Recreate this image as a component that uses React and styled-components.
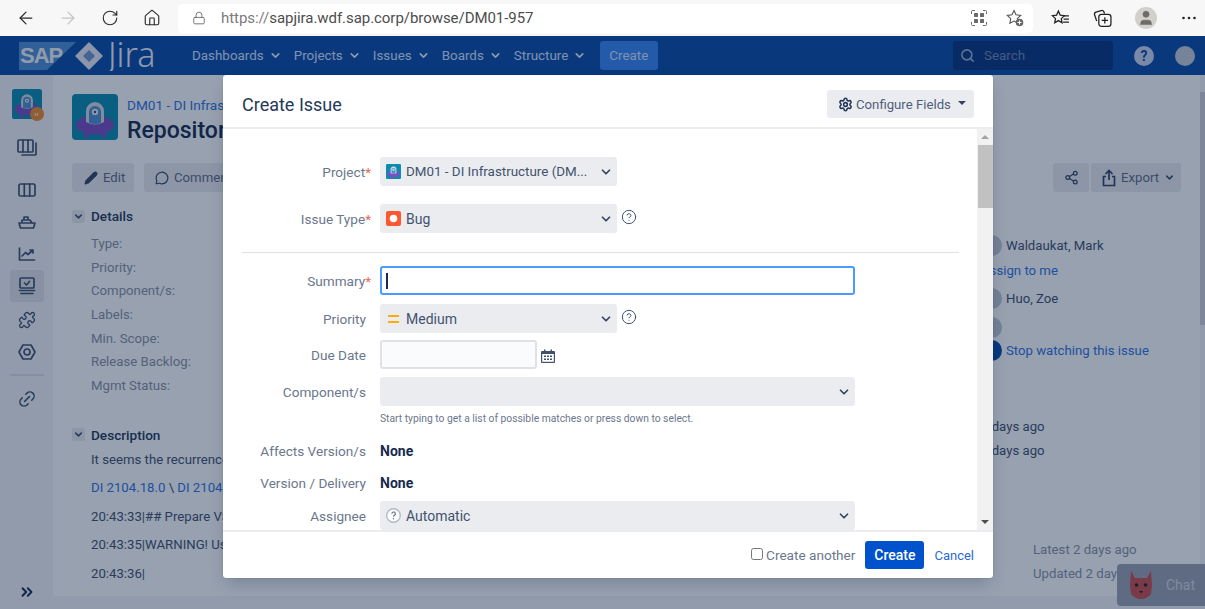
import React from 'react'
import styled, { createGlobalStyle } from 'styled-components'
import { ArrowLeft, ArrowRight, RotateCw, Home, Lock, Search, Settings, Link2, ChevronsRight, Pencil, MessageCircle, Share2, Puzzle, ChevronDown, HelpCircle, User } from 'lucide-react'

const GlobalStyle = createGlobalStyle`
  html, body { margin: 0; padding: 0; height: 100%; overflow: hidden; }
  body { font-family: Roboto, "Noto Sans", sans-serif; font-size: 13.6px; color: #172b4d; }
  #root { height: 100%; }
  * { box-sizing: border-box; }
`

const Screen = styled.div`
  width: 1205px;
  height: 609px;
  display: flex;
  flex-direction: column;
  overflow: hidden;
`

/* browser chrome */
const BrowserBar = styled.div`
  height: 36px;
  flex: none;
  background: #f7f7f7;
  display: flex;
  align-items: center;
  padding-left: 5px;
`

const ToolSlot = styled.div`
  width: ${p => p.$w || 42}px;
  height: 30px;
  flex: none;
  display: flex;
  align-items: center;
  justify-content: center;
  color: ${p => p.$muted ? '#c4c4c4' : '#2b2b2b'};
`

const UrlPill = styled.div`
  width: 855px;
  height: 29px;
  margin: 0 6px 0 5px;
  background: #fff;
  border-radius: 5px;
  display: flex;
  align-items: center;
  padding: 0 0 0 14px;
  flex: none;
`

const UrlText = styled.div`
  margin-left: 15px;
  flex: 1;
  font-size: 15px;
  letter-spacing: -0.05px;
  color: #4d4d4d;
  span { color: #7a7a7a; }
`

const ProfileDot = styled.div`
  width: 22px;
  height: 22px;
  border-radius: 50%;
  background: #d2d0cc;
  color: #6f6c68;
  display: flex;
  align-items: center;
  justify-content: center;
  overflow: hidden;
`

/* everything below the browser bar */
const Page = styled.div`
  position: relative;
  flex: 1;
  min-height: 0;
  display: flex;
  flex-direction: column;
  background: #fff;
`

const Blanket = styled.div`
  position: absolute;
  inset: 0;
  background: rgba(9, 30, 66, 0.42);
`

/* jira nav */
const Nav = styled.nav`
  height: 39px;
  flex: none;
  background: #0a4aa8;
  display: flex;
  align-items: center;
  padding-left: 19px;
  color: #fff;
`

const LogoWrap = styled.div`
  width: 140px;
  height: 30px;
  flex: none;
  margin-right: 33px;
`

const NavItem = styled.div`
  display: flex;
  align-items: center;
  gap: 5px;
  margin-right: 12px;
  font-size: 13.4px;
  color: #d4e4ff;
`

const NavCreate = styled.div`
  width: 58px;
  height: 29px;
  margin-left: 1.5px;
  background: #3685f5;
  border-radius: 3px;
  display: flex;
  align-items: center;
  justify-content: center;
  font-size: 13.4px;
  color: #d4e4ff;
`

const SearchBox = styled.div`
  width: 160px;
  height: 29px;
  margin-left: auto;
  background: #08357f;
  border-radius: 3px;
  display: flex;
  align-items: center;
  gap: 9px;
  padding-left: 7px;
  font-size: 13.4px;
  color: #6f87ad;
  svg { color: #9fb0cb; }
`

const NavRound = styled.div`
  width: 20px;
  height: 20px;
  border-radius: 50%;
  background: ${p => p.$bg};
  margin-left: ${p => p.$ml}px;
  margin-right: ${p => p.$mr || 0}px;
  display: flex;
  align-items: center;
  justify-content: center;
  font-weight: 700;
  font-size: 14px;
  color: #0a4aa8;
`

/* page behind the dialog */
const Body = styled.div`
  flex: 1;
  min-height: 0;
  display: flex;
`

const Sidebar = styled.aside`
  width: 53px;
  flex: none;
  background: #f4f5f7;
  display: flex;
  flex-direction: column;
  align-items: center;
  padding-top: 14px;
  color: #42526e;
`

const SideLogo = styled.div`
  position: relative;
  width: 30px;
  height: 30px;
  margin-bottom: 13px;
`

const SideBadge = styled.div`
  position: absolute;
  right: -2px;
  bottom: -2px;
  width: 14px;
  height: 14px;
  border-radius: 50%;
  background: #f28c28;
  color: #fff;
  font-size: 7px;
  font-weight: 700;
  display: flex;
  align-items: center;
  justify-content: center;
`

const SideIcon = styled.div`
  width: 34px;
  height: ${p => p.$h || 32}px;
  flex: none;
  display: flex;
  align-items: center;
  justify-content: center;
  border-radius: 3px;
  background: ${p => p.$active ? '#e2e4e9' : 'transparent'};
  margin-bottom: ${p => p.$mb || 0}px;
`

const SideRule = styled.div`
  width: 34px;
  height: 2px;
  flex: none;
  background: #dfe1e6;
  margin: 6px 0 7px;
`

const SideBottom = styled.div`
  margin-top: auto;
  height: 26px;
  flex: none;
  color: #172b4d;
`

const Main = styled.div`
  flex: 1;
  min-width: 0;
  display: flex;
  flex-direction: column;
`

const Content = styled.div`
  flex: 1;
  min-height: 0;
  background: #fff;
  padding: 19px 19px 0;
  overflow: hidden;
  font-size: 13.2px;
`

const FooterBand = styled.div`
  height: 13px;
  flex: none;
  background: #f4f5f7;
`

const IssueHead = styled.div`
  display: flex;
  gap: 9px;
  height: 46px;
`

const IssueCrumb = styled.div`
  font-size: 13.6px;
  line-height: 22px;
  color: #2f74e0;
  white-space: nowrap;
`

const IssueTitle = styled.h1`
  margin: 0;
  font-size: 23px;
  font-weight: 500;
  line-height: 30px;
  color: #172b4d;
`

const ActionRow = styled.div`
  display: flex;
  justify-content: space-between;
  margin-top: 23px;
  height: 29px;
`

const ActionGroup = styled.div`
  display: flex;
  gap: ${p => p.$gap}px;
`

const ActionBtn = styled.div`
  height: 29px;
  width: ${p => p.$w}px;
  padding-left: ${p => p.$pad}px;
  background: #ebecf0;
  border-radius: 3px;
  display: flex;
  align-items: center;
  gap: 5px;
  color: #5e6c84;
  white-space: nowrap;
  overflow: hidden;
  svg { color: #344563; flex: none; }
`

const Columns = styled.div`
  display: grid;
  grid-template-columns: 1fr 232px;
  margin-top: 13px;
`

const SectionHead = styled.div`
  height: 22px;
  display: flex;
  align-items: center;
  gap: 6px;
  font-size: 13.6px;
  font-weight: 500;
  color: #253858;
  margin-top: ${p => p.$mt || 0}px;
`

const Toggle = styled.div`
  width: 13px;
  height: 13px;
  border-radius: 2px;
  background: #ebecf0;
  display: flex;
  align-items: center;
  justify-content: center;
`

const FieldList = styled.div`
  margin: 5px 0 0 19px;
`

const FieldName = styled.div`
  height: 23.7px;
  line-height: 23.7px;
  color: #8993a4;
`

const DescText = styled.div`
  margin-left: 19px;
  padding-top: 4px;
`

const DescLine = styled.p`
  margin: 0 0 8.5px;
  line-height: 20px;
  color: #42526e;
  white-space: nowrap;
`

const DescLink = styled.span`
  color: #2f74e0;
`

const RightLine = styled.div`
  display: flex;
  align-items: center;
  gap: 4px;
  height: ${p => p.$h || 24}px;
  margin-top: ${p => p.$mt || 0}px;
  padding-left: ${p => p.$indent || 32}px;
  color: ${p => p.$tone || '#42526e'};
  white-space: nowrap;
`

const PersonDot = styled.div`
  width: ${p => p.$size || 21}px;
  height: ${p => p.$size || 21}px;
  border-radius: 50%;
  background: ${p => p.$bg || '#c1c7d0'};
  flex: none;
`

const PageScroll = styled.div`
  width: 5px;
  flex: none;
  background: #f4f5f7;
  padding-top: 17px;
`

const PageThumb = styled.div`
  height: 233px;
  background: #d1d3d8;
`

const ChatTab = styled.div`
  position: absolute;
  right: 0;
  bottom: 3px;
  width: 88px;
  height: 42px;
  border-radius: 4px 0 0 4px;
  background: #9da3b0;
  display: flex;
  align-items: center;
  gap: 12px;
  padding-left: 11px;
  font-size: 14px;
  color: #d4d8e0;
`

/* dialog */
const Dialog = styled.div`
  position: absolute;
  left: 223px;
  top: 39px;
  width: 770px;
  height: 503px;
  background: #fff;
  border-radius: 3px;
  box-shadow: 0 8px 16px -4px rgba(9, 30, 66, 0.25), 0 0 1px rgba(9, 30, 66, 0.31);
  display: flex;
  flex-direction: column;
  overflow: hidden;
`

const DialogHead = styled.header`
  height: 54px;
  flex: none;
  border-bottom: 2px solid #ebecf0;
  display: flex;
  align-items: center;
  justify-content: space-between;
  padding: 6px 19px 0;
`

const DialogTitle = styled.h2`
  margin: 0;
  font-size: 18px;
  font-weight: 400;
  color: #253858;
`

const ConfigBtn = styled.div`
  width: 147px;
  height: 28px;
  background: #ebecf0;
  border-radius: 3px;
  display: flex;
  align-items: center;
  gap: 3px;
  padding-left: 11px;
  font-size: 13.2px;
  color: #505f79;
  svg { color: #253858; }
`

const Caret = styled.span`
  width: 0;
  height: 0;
  margin-left: 4px;
  margin-bottom: 2px;
  border-left: 4px solid transparent;
  border-right: 4px solid transparent;
  border-top: 4px solid #344563;
`

const DialogMiddle = styled.div`
  flex: 1;
  min-height: 0;
  display: flex;
`

const FormScroll = styled.div`
  flex: 1;
  min-width: 0;
  overflow: hidden;
  padding: 28px 18px 0 19px;
`

const Row = styled.div`
  display: flex;
  align-items: center;
  min-height: ${p => p.$h || 29}px;
  margin-top: ${p => p.$mt || 0}px;
  margin-bottom: ${p => p.$mb || 0}px;
`

const Label = styled.div`
  width: 138px;
  flex: none;
  padding-right: 14px;
  text-align: right;
  color: #6b778c;
  i { font-style: normal; color: #e9694f; margin-right: -5px; }
`

const Select = styled.div`
  width: ${p => p.$w}px;
  height: 29px;
  flex: none;
  background: #ebecf0;
  border-radius: 3px;
  display: flex;
  align-items: center;
  gap: 5px;
  padding: 0 4px 0 6px;
  font-size: 14px;
  color: #42526e;
  white-space: nowrap;
`

const SelectText = styled.span`
  flex: 1;
  min-width: 0;
  overflow: hidden;
  font-size: ${p => p.$size || 14}px;
`

const Help = styled.div`
  margin: ${p => p.$top || -3}px 0 0 4px;
  color: #42526e;
  display: flex;
`

const Divider = styled.div`
  height: 1px;
  background: #dfe1e6;
  margin: 19px 0 13px;
`

const SummaryInput = styled.div`
  width: 475px;
  height: 29px;
  border: 2px solid #4c9aff;
  border-radius: 3px;
  display: flex;
  align-items: center;
  padding-left: 4px;
`

const Cursor = styled.div`
  width: 2px;
  height: 16px;
  background: #172b4d;
`

const DateInput = styled.div`
  width: 157px;
  height: 29px;
  background: #fafbfc;
  border: 2px solid #dfe1e6;
  border-radius: 3px;
`

const Hint = styled.div`
  margin: 5px 0 0 138px;
  font-size: 10.3px;
  line-height: 16px;
  color: #6b778c;
`

const Value = styled.div`
  font-weight: 700;
  font-size: 14px;
  color: #172b4d;
`

const PrioLines = styled.div`
  width: 15px;
  display: flex;
  flex-direction: column;
  align-items: center;
  gap: 4px;
  span { width: 11px; height: 2px; background: #ffab00; }
`

const ScrollTrack = styled.div`
  width: 16px;
  flex: none;
  background: #f1f1f1;
  display: flex;
  flex-direction: column;
  align-items: center;
  padding-top: 6px;
`

const ScrollThumb = styled.div`
  width: 15px;
  height: 63px;
  margin-top: 6px;
  background: #c1c1c1;
`

const Arrow = styled.div`
  width: 0;
  height: 0;
  border-left: 4px solid transparent;
  border-right: 4px solid transparent;
  ${p => p.$down
    ? 'border-top: 4px solid #505050; margin-top: auto; margin-bottom: 6px;'
    : 'border-bottom: 4px solid #a3a3a3;'}
`

const DialogFoot = styled.footer`
  height: 48px;
  flex: none;
  border-top: 2px solid #ebecf0;
  display: flex;
  align-items: center;
  justify-content: flex-end;
  padding: 0 19px 0 0;
`

const CheckLabel = styled.label`
  display: flex;
  align-items: center;
  gap: 3px;
  margin-right: 10px;
  color: #6b778c;
`

const CheckBox = styled.input`
  width: 12px;
  height: 12px;
  margin: 0 0 2px;
`

const PrimaryBtn = styled.div`
  width: 59px;
  height: 28px;
  background: #0052cc;
  border-radius: 3px;
  color: #fff;
  font-weight: 500;
  font-size: 14px;
  display: flex;
  align-items: center;
  justify-content: center;
  margin-right: 10px;
`

const CancelLink = styled.div`
  font-size: 13px;
  color: #2a6bd6;
`

function ProjectAvatar({ size }) {
  return (
    <svg width={size} height={size} viewBox="0 0 46 46">
      <rect width="46" height="46" rx="4" fill="#0b8cae" />
      <ellipse cx="23" cy="31" rx="19" ry="9.500" fill="#7a4fc0" />
      <path d="M12 38l1 6h3l2-5zM34 38l-1 6h-3l-2-5z" fill="#7a4fc0" />
      <path d="M14 28V17a9 9 0 0 1 18 0v11q-9 5-18 0z" fill="#d6d9dc" />
      <path d="M17 29V18a6 6 0 0 1 12 0v11q-6 2-12 0z" fill="#4c8fd0" />
      <circle cx="23" cy="18" r="3.2" fill="#e9edf2" />
      <circle cx="23" cy="18" r="1.2" fill="#26476e" />
    </svg>
  )
}

function LogoArt() {
  return (
    <svg width="140" height="30" viewBox="0 0 140 30">
      <path d="M0 1h57L28 29H0z" fill="#4f8fd6" />
      <text x="1" y="22" fontFamily="Liberation Sans" fontWeight="700" fontSize="22" fill="#f2f5fa" letterSpacing="-1">SAP</text>
      <path d="M70 1l14 14-14 14-14-14z" fill="#e8edf5" />
      <path d="M70 9l6 6-6 6-6-6z" fill="#6d97d0" />
      <text x="89" y="26" fontFamily="Noto Sans" fontWeight="300" fontSize="34" fill="#f0f3f8">Jira</text>
    </svg>
  )
}

const stroke = { fill: 'none', stroke: 'currentColor', strokeWidth: 1.7, strokeLinecap: 'round', strokeLinejoin: 'round' }

function BacklogIcon() {
  return (
    <svg width="20" height="20" viewBox="0 0 20 20" {...stroke}>
      <rect x="1" y="2" width="15" height="12" rx="1" />
      <path d="M6 2v12M11 2v12M19 5v11a1 1 0 0 1-1 1H5" />
    </svg>
  )
}

function BoardIcon() {
  return (
    <svg width="18" height="16" viewBox="0 0 18 16" {...stroke}>
      <rect x="1" y="2" width="16" height="12" rx="1.500" />
      <path d="M6.300 2v12M11.700 2v12" />
    </svg>
  )
}

function ShipIcon() {
  return (
    <svg width="18" height="16" viewBox="0 0 18 16" {...stroke}>
      <path d="M1 9h16l-1.500 5H2.500zM4 9V6h8l2 3M6 6V3h4v3" />
    </svg>
  )
}

function TrendIcon() {
  return (
    <svg width="18" height="16" viewBox="0 0 18 16" {...stroke}>
      <path d="M1.500 2v12h15M4 10l3.500-3.500 2.500 2L15 4M12 4h3v3" />
    </svg>
  )
}

function ScreenCheckIcon() {
  return (
    <svg width="18" height="18" viewBox="0 0 18 18" {...stroke}>
      <rect x="2" y="1" width="14" height="10" rx="1" />
      <path d="M6.500 6l2 2 3-3.500M1.500 13.500h15M3 16.500h12" />
    </svg>
  )
}

function NutIcon() {
  return (
    <svg width="18" height="18" viewBox="0 0 18 18" {...stroke}>
      <path d="M5 2h8l4 7-4 7H5L1 9z" />
      <circle cx="9" cy="9" r="3" />
    </svg>
  )
}

function GridScanIcon() {
  return (
    <svg width="16" height="16" viewBox="0 0 16 16" fill="#6a6a6a">
      <rect x="3" y="3" width="4" height="4" rx=".5" />
      <rect x="9" y="3" width="4" height="4" rx=".5" />
      <rect x="3" y="9" width="4" height="4" rx=".5" />
      <rect x="9" y="9" width="4" height="4" rx=".5" />
      <path d="M.5 4V1.500a1 1 0 0 1 1-1H4M12 .5h2.500a1 1 0 0 1 1 1V4M15.500 12v2.500a1 1 0 0 1-1 1H12M4 15.500H1.500a1 1 0 0 1-1-1V12" fill="none" stroke="#6a6a6a" />
    </svg>
  )
}

function StarPlusIcon() {
  return (
    <svg width="18" height="18" viewBox="0 0 18 18">
      <path d="M8 1.500l2 4.300 4.700.6-3.400 3.200.8 4.600L8 12l-4.100 2.200.8-4.600L1.300 6.400 6 5.800z" fill="none" stroke="#555" strokeWidth="1.100" />
      <circle cx="13.500" cy="13.500" r="3.800" fill="#666" />
      <path d="M13.500 11.500v4M11.500 13.500h4" stroke="#fff" strokeWidth="1.100" />
    </svg>
  )
}

function FavListIcon() {
  return (
    <svg width="19" height="19" viewBox="0 0 18 18" fill="none" stroke="#222" strokeWidth="1.200">
      <path d="M7 2l1.700 3.800 4 .5-3 2.800.8 4L7 11l-3.500 2.100.8-4-3-2.800 4-.5z" />
      <path d="M12 6.500h5M12 9.500h5M11.500 12.500h5.500" />
    </svg>
  )
}

function CollectionsIcon() {
  return (
    <svg width="19" height="19" viewBox="0 0 18 18" fill="none" stroke="#222" strokeWidth="1.200">
      <path d="M3.500 11.500l-2-6a2 2 0 0 1 1.300-2.500l5-1.500a2 2 0 0 1 2.400 1l.8 1.800" />
      <rect x="5.500" y="5" width="11.500" height="11.500" rx="2.500" />
      <path d="M11.200 7.800v6M8.200 10.800h6" />
    </svg>
  )
}

function DotsIcon() {
  return (
    <svg width="14" height="4" viewBox="0 0 14 4" fill="#222">
      <circle cx="1.500" cy="2" r="1.300" />
      <circle cx="7" cy="2" r="1.300" />
      <circle cx="12.500" cy="2" r="1.300" />
    </svg>
  )
}

function BugIcon() {
  return (
    <svg width="15" height="15" viewBox="0 0 15 15">
      <rect width="15" height="15" rx="2" fill="#ff5630" />
      <circle cx="7.500" cy="7.500" r="3.800" fill="#fff" />
    </svg>
  )
}

function CalendarIcon() {
  return (
    <svg width="14" height="14" viewBox="0 0 14 14">
      <path d="M1 2h12a1 1 0 0 1 1 1v10a1 1 0 0 1-1 1H1a1 1 0 0 1-1-1V3a1 1 0 0 1 1-1z" fill="#42526e" />
      <rect x="3" y="0.500" width="1.500" height="3" fill="#42526e" />
      <rect x="9.500" y="0.500" width="1.500" height="3" fill="#42526e" />
      <rect x="1.200" y="5" width="11.600" height="7.800" fill="#fff" />
      <path d="M3 6.500h2v1.500H3zM6 6.500h2v1.500H6zM9 6.500h2v1.500H9zM3 9.500h2V11H3zM6 9.500h2V11H6zM9 9.500h2V11H9z" fill="#42526e" />
    </svg>
  )
}

function AutoAvatar() {
  return (
    <svg width="15" height="15" viewBox="0 0 15 15">
      <circle cx="7.500" cy="7.500" r="6.800" fill="#fff" stroke="#b3bac5" strokeWidth="1.400" />
      <path d="M5.800 5.800a1.800 1.800 0 1 1 2.600 1.600c-.6.300-.9.600-.9 1.300" fill="none" stroke="#6b778c" strokeWidth="1.200" />
      <circle cx="7.500" cy="10.800" r=".8" fill="#6b778c" />
    </svg>
  )
}

function SquirrelIcon() {
  return (
    <svg width="26" height="30" viewBox="0 0 26 30">
      <path d="M3 1l4 7h12l4-7 1 14-1 9q-4 5-10 5T3 24L2 15z" fill="#c8504a" />
      <circle cx="8.500" cy="15" r="1.800" fill="#2d1a22" />
      <circle cx="17.500" cy="15" r="1.800" fill="#2d1a22" />
      <path d="M11 21h4l-2 2.500z" fill="#2d1a22" />
    </svg>
  )
}

const Chevron = () => <ChevronDown size={14} strokeWidth={3} color="#344563" />
const NavChevron = () => <ChevronDown size={13} strokeWidth={3} color="#eef3ff" />
const SmallChevron = () => <ChevronDown size={11} strokeWidth={3.500} color="#42526e" />

const navItems = ['Dashboards', 'Projects', 'Issues', 'Boards', 'Structure']
const fieldNames = ['Type:', 'Priority:', 'Component/s:', 'Labels:', 'Min. Scope:', 'Release Backlog:', 'Mgmt Status:']

export default function App() {
  return (
    <Screen>
      <GlobalStyle />
      <BrowserBar>
        <ToolSlot><ArrowLeft size={20} strokeWidth={1.500} /></ToolSlot>
        <ToolSlot $muted><ArrowRight size={20} strokeWidth={1.500} /></ToolSlot>
        <ToolSlot><RotateCw size={18} strokeWidth={1.500} /></ToolSlot>
        <ToolSlot><Home size={18} strokeWidth={1.500} /></ToolSlot>
        <UrlPill>
          <Lock size={14} strokeWidth={1.500} color="#666" />
          <UrlText><span>https://</span>sapjira.wdf.sap.corp/browse/DM01-957</UrlText>
          <ToolSlot $w={36}><GridScanIcon /></ToolSlot>
          <ToolSlot $w={36}><StarPlusIcon /></ToolSlot>
        </UrlPill>
        <ToolSlot $w={42}><FavListIcon /></ToolSlot>
        <ToolSlot $w={42}><CollectionsIcon /></ToolSlot>
        <ToolSlot $w={45}><ProfileDot><User size={18} fill="currentColor" strokeWidth={1} /></ProfileDot></ToolSlot>
        <ToolSlot $w={42}><DotsIcon /></ToolSlot>
      </BrowserBar>
      <Page>
        <Nav>
          <LogoWrap><LogoArt /></LogoWrap>
          {navItems.map(item => (
            <NavItem key={item}>{item}<NavChevron /></NavItem>
          ))}
          <NavCreate>Create</NavCreate>
          <SearchBox><Search size={15} strokeWidth={2.500} />Search</SearchBox>
          <NavRound $bg="#c9d8f0" $ml={21}>?</NavRound>
          <NavRound $bg="#c7ccd6" $ml={21} $mr={10} />
        </Nav>
        <Body>
          <Sidebar>
            <SideLogo>
              <ProjectAvatar size={30} />
              <SideBadge>‹›</SideBadge>
            </SideLogo>
            <SideIcon $mb={10}><BacklogIcon /></SideIcon>
            <SideIcon><BoardIcon /></SideIcon>
            <SideIcon><ShipIcon /></SideIcon>
            <SideIcon><TrendIcon /></SideIcon>
            <SideIcon $active $mb={2}><ScreenCheckIcon /></SideIcon>
            <SideIcon><Puzzle size={18} strokeWidth={1.700} /></SideIcon>
            <SideIcon><NutIcon /></SideIcon>
            <SideRule />
            <SideIcon><Link2 size={20} strokeWidth={1.800} style={{ transform: 'rotate(-45deg)' }} /></SideIcon>
            <SideBottom><ChevronsRight size={18} strokeWidth={2.500} /></SideBottom>
          </Sidebar>
          <Main>
            <Content>
              <IssueHead>
                <ProjectAvatar size={46} />
                <div>
                  <IssueCrumb>DM01 - DI Infrastructure</IssueCrumb>
                  <IssueTitle>Repository</IssueTitle>
                </div>
              </IssueHead>
              <ActionRow>
                <ActionGroup $gap={10}>
                  <ActionBtn $w={62} $pad={12}><Pencil size={14} fill="currentColor" />Edit</ActionBtn>
                  <ActionBtn $w={100} $pad={11}><MessageCircle size={14} />Comment</ActionBtn>
                </ActionGroup>
                <ActionGroup $gap={2}>
                  <ActionBtn $w={36} $pad={11}><Share2 size={15} /></ActionBtn>
                  <ActionBtn $w={90} $pad={11}>
                    <svg width="14" height="18" viewBox="0 0 14 18" fill="none" stroke="currentColor" strokeWidth="1.700">
                      <path d="M7 11V1.500M3.500 5L7 1.500 10.500 5M4 7.500H1.500V16.500h11V7.500H10" />
                    </svg>
                    Export
                    <SmallChevron />
                  </ActionBtn>
                </ActionGroup>
              </ActionRow>
              <Columns>
                <div>
                  <SectionHead><Toggle><SmallChevron /></Toggle>Details</SectionHead>
                  <FieldList>
                    {fieldNames.map(name => <FieldName key={name}>{name}</FieldName>)}
                  </FieldList>
                  <SectionHead $mt={26}><Toggle><SmallChevron /></Toggle>Description</SectionHead>
                  <DescText>
                    <DescLine>It seems the recurrence of the issue</DescLine>
                    <DescLine><DescLink>DI 2104.18.0</DescLink> \ <DescLink>DI 2104.18.1</DescLink></DescLine>
                    <DescLine>20:43:33|## Prepare VSCode</DescLine>
                    <DescLine>20:43:35|WARNING! Using</DescLine>
                    <DescLine>20:43:36|</DescLine>
                  </DescText>
                </div>
                <div>
                  <RightLine $mt={28}><PersonDot />Waldaukat, Mark</RightLine>
                  <RightLine $mt={1} $tone="#2f74e0">Assign to me</RightLine>
                  <RightLine $mt={4}><PersonDot />Huo, Zoe</RightLine>
                  <RightLine $mt={5}><PersonDot /></RightLine>
                  <RightLine $mt={-1} $tone="#2f74e0"><PersonDot $bg="#0a4aa8" />Stop watching this issue</RightLine>
                  <RightLine $mt={52}>2 days ago</RightLine>
                  <RightLine>2 days ago</RightLine>
                  <RightLine $mt={75} $indent={84} $tone="#8993a4">Latest 2 days ago</RightLine>
                  <RightLine $indent={84} $tone="#8993a4">Updated 2 days ago</RightLine>
                </div>
              </Columns>
            </Content>
            <FooterBand />
          </Main>
          <PageScroll><PageThumb /></PageScroll>
        </Body>
        <ChatTab><SquirrelIcon />Chat</ChatTab>
        <Blanket />
        <Dialog>
          <DialogHead>
            <DialogTitle>Create Issue</DialogTitle>
            <ConfigBtn><Settings size={15} strokeWidth={2.500} />Configure Fields<Caret /></ConfigBtn>
          </DialogHead>
          <DialogMiddle>
            <FormScroll>
              <Row $mb={18}>
                <Label>Project<i>*</i></Label>
                <Select $w={237}>
                  <ProjectAvatar size={15} />
                  <SelectText $size={13.4}>DM01 - DI Infrastructure (DM...</SelectText>
                  <Chevron />
                </Select>
              </Row>
              <Row>
                <Label>Issue Type<i>*</i></Label>
                <Select $w={237}><BugIcon /><SelectText>Bug</SelectText><Chevron /></Select>
                <Help><HelpCircle size={16} strokeWidth={1.500} /></Help>
              </Row>
              <Divider />
              <Row $mb={9}>
                <Label>Summary<i>*</i></Label>
                <SummaryInput><Cursor /></SummaryInput>
              </Row>
              <Row $mb={7}>
                <Label>Priority</Label>
                <Select $w={237}><PrioLines><span /><span /></PrioLines><SelectText>Medium</SelectText><Chevron /></Select>
                <Help><HelpCircle size={16} strokeWidth={1.500} /></Help>
              </Row>
              <Row $mb={8}>
                <Label>Due Date</Label>
                <DateInput />
                <Help $top={3}><CalendarIcon /></Help>
              </Row>
              <Row>
                <Label>Component/s</Label>
                <Select $w={475}><SelectText /><Chevron /></Select>
              </Row>
              <Hint>Start typing to get a list of possible matches or press down to select.</Hint>
              <Row $h={24} $mt={12} $mb={8}>
                <Label>Affects Version/s</Label>
                <Value>None</Value>
              </Row>
              <Row $h={24} $mb={6}>
                <Label>Version / Delivery</Label>
                <Value>None</Value>
              </Row>
              <Row>
                <Label>Assignee</Label>
                <Select $w={475}><AutoAvatar /><SelectText>Automatic</SelectText><Chevron /></Select>
              </Row>
            </FormScroll>
            <ScrollTrack>
              <Arrow />
              <ScrollThumb />
              <Arrow $down />
            </ScrollTrack>
          </DialogMiddle>
          <DialogFoot>
            <CheckLabel><CheckBox type="checkbox" readOnly />Create another</CheckLabel>
            <PrimaryBtn>Create</PrimaryBtn>
            <CancelLink>Cancel</CancelLink>
          </DialogFoot>
        </Dialog>
      </Page>
    </Screen>
  )
}
